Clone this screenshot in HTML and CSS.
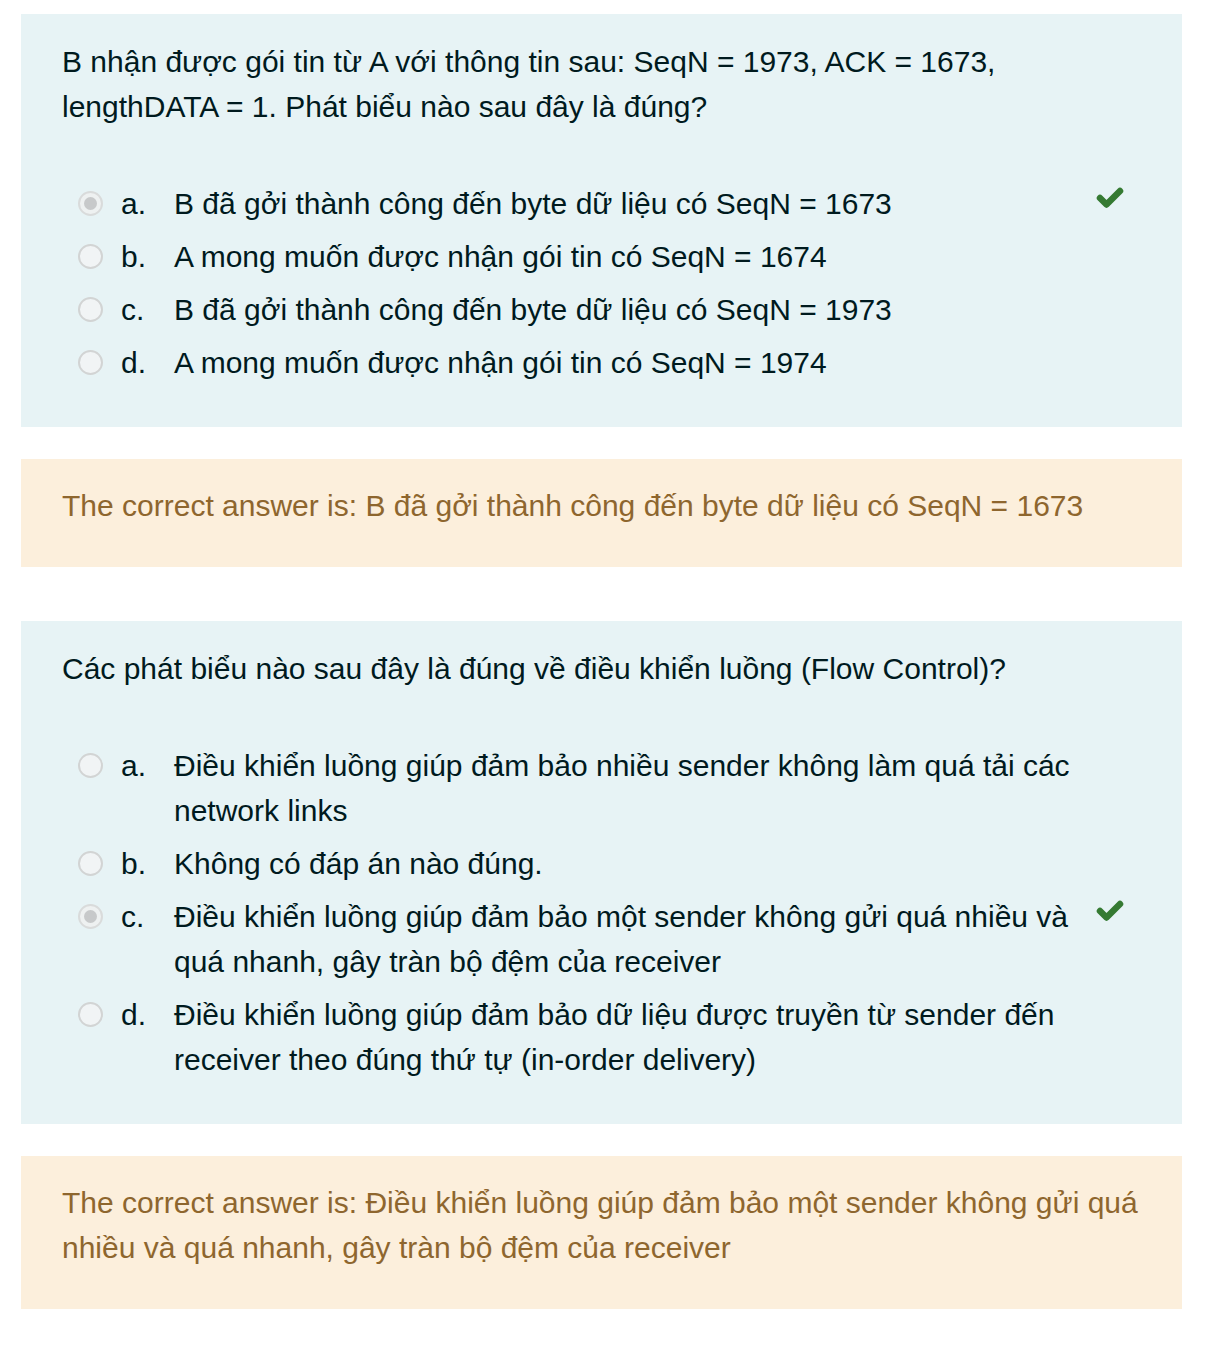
FILE: index.html
```html
<!DOCTYPE html>
<html lang="vi">
<head>
<meta charset="utf-8">
<title>Quiz review</title>
<link rel="stylesheet" href="styles.css">
</head>
<body>
<div class="page">
  <section class="que que-first">
    <div class="formulation">
      <div class="qtext">B nhận được gói tin từ A với thông tin sau: SeqN = 1973, ACK = 1673, lengthDATA = 1. Phát biểu nào sau đây là đúng?</div>
      <div class="answer">
        <div class="option">
          <span class="radio checked"></span>
          <span class="num">a.</span>
          <div class="text">B đã gởi thành công đến byte dữ liệu có SeqN = 1673</div>
          <span class="mark"><svg viewBox="0 0 28 22" width="28" height="22"><polyline points="4,11 10.5,17.5 24,4" fill="none" stroke="#357a32" stroke-width="6.5" stroke-linecap="round" stroke-linejoin="round"/></svg></span>
        </div>
        <div class="option">
          <span class="radio"></span>
          <span class="num">b.</span>
          <div class="text">A mong muốn được nhận gói tin có SeqN = 1674</div>
          <span class="mark"></span>
        </div>
        <div class="option">
          <span class="radio"></span>
          <span class="num">c.</span>
          <div class="text">B đã gởi thành công đến byte dữ liệu có SeqN = 1973</div>
          <span class="mark"></span>
        </div>
        <div class="option">
          <span class="radio"></span>
          <span class="num">d.</span>
          <div class="text">A mong muốn được nhận gói tin có SeqN = 1974</div>
          <span class="mark"></span>
        </div>
      </div>
    </div>
    <div class="outcome">The correct answer is: B đã gởi thành công đến byte dữ liệu có SeqN = 1673</div>
  </section>

  <section class="que">
    <div class="formulation">
      <div class="qtext">Các phát biểu nào sau đây là đúng về điều khiển luồng (Flow Control)?</div>
      <div class="answer">
        <div class="option">
          <span class="radio"></span>
          <span class="num">a.</span>
          <div class="text">Điều khiển luồng giúp đảm bảo nhiều sender không làm quá tải các network links</div>
          <span class="mark"></span>
        </div>
        <div class="option">
          <span class="radio"></span>
          <span class="num">b.</span>
          <div class="text">Không có đáp án nào đúng.</div>
          <span class="mark"></span>
        </div>
        <div class="option">
          <span class="radio checked"></span>
          <span class="num">c.</span>
          <div class="text">Điều khiển luồng giúp đảm bảo một sender không gửi quá nhiều và quá nhanh, gây tràn bộ đệm của receiver</div>
          <span class="mark"><svg viewBox="0 0 28 22" width="28" height="22"><polyline points="4,11 10.5,17.5 24,4" fill="none" stroke="#357a32" stroke-width="6.5" stroke-linecap="round" stroke-linejoin="round"/></svg></span>
        </div>
        <div class="option">
          <span class="radio"></span>
          <span class="num">d.</span>
          <div class="text">Điều khiển luồng giúp đảm bảo dữ liệu được truyền từ sender đến receiver theo đúng thứ tự (in-order delivery)</div>
          <span class="mark"></span>
        </div>
      </div>
    </div>
    <div class="outcome">The correct answer is: Điều khiển luồng giúp đảm bảo một sender không gửi quá nhiều và quá nhanh, gây tràn bộ đệm của receiver</div>
  </section>
</div>
</body>
</html>
```

FILE: styles.css
```css
html, body {
  margin: 0;
  padding: 0;
  background: #ffffff;
}

body {
  font-family: "Liberation Sans", Arial, "Helvetica Neue", sans-serif;
  font-size: 30px;
  line-height: 45px;
  color: #001a1e;
}

.page {
  padding: 14px 0 0 21px;
  width: 1161px;
}

.que {
  display: flex;
  flex-direction: column;
}

.que + .que {
  margin-top: 54px;
}

.formulation {
  background: #e7f3f5;
  padding: 25px 41px 38px 41px;
}

.qtext {
  margin-bottom: 48px;
}

.answer {
  display: flex;
  flex-direction: column;
}

.option {
  display: flex;
  align-items: flex-start;
  padding: 4px 0;
}

.radio {
  flex: 0 0 auto;
  box-sizing: border-box;
  width: 25px;
  height: 25px;
  margin: 10px 18px 0 16px;
  border-radius: 50%;
  border: 2px solid #d2d4d4;
  background: #f1f4f5;
  display: flex;
  align-items: center;
  justify-content: center;
}

.radio.checked {
  border-color: #d9dbdb;
  background: #eef1f1;
}

.radio.checked::after {
  content: "";
  width: 13px;
  height: 13px;
  border-radius: 50%;
  background: #c7c9ca;
}

.num {
  flex: 0 0 53px;
}

.text {
  flex: 1 1 auto;
  min-width: 0;
}

.mark {
  flex: 0 0 28px;
  height: 22px;
  margin: 6px 17px 0 10px;
}

.mark svg {
  display: block;
}

.outcome {
  margin-top: 32px;
  background: #fcefdc;
  color: #8e662e;
  padding: 24px 41px 39px 41px;
}
```
